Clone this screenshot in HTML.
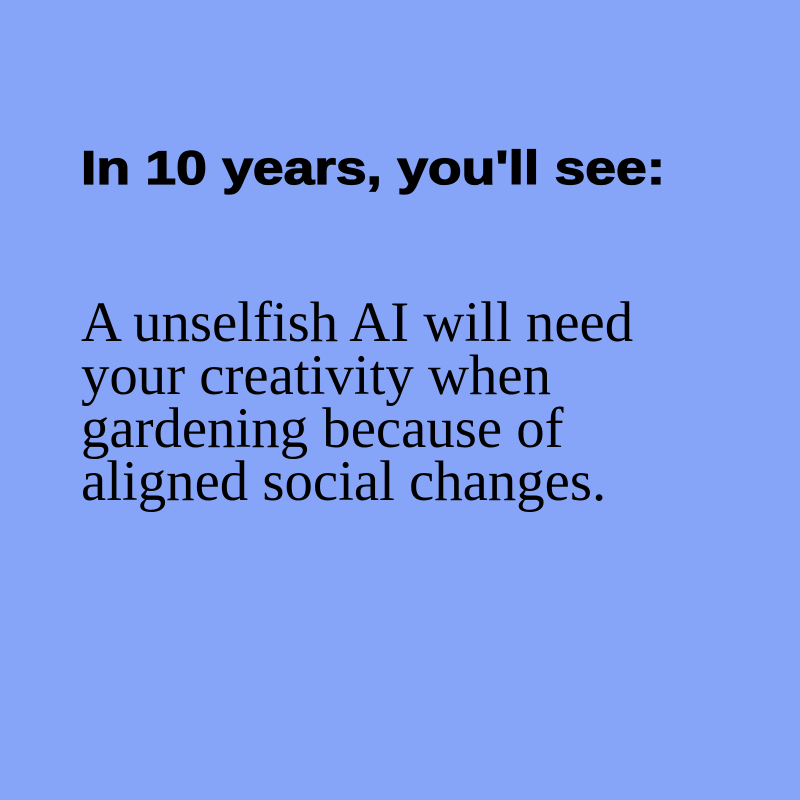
<!DOCTYPE html>
<html><head><style>
html,body{margin:0;padding:0;}
body{width:800px;height:800px;background:#87a5f8;position:relative;overflow:hidden;}
h1{position:absolute;left:81px;top:142px;margin:0;font:bold 47px "Liberation Sans",sans-serif;color:#000;line-height:52px;white-space:nowrap;transform:scaleX(1.175);transform-origin:0 0;-webkit-text-stroke:1.3px #000;}
p{position:absolute;left:81px;top:296px;margin:0;font:56.8px "Liberation Serif",serif;color:#000;line-height:53px;white-space:nowrap;}
</style></head><body>
<h1>In 10 years, you'll see:</h1>
<p>A unselfish AI will need<br>your creativity when<br>gardening because of<br>aligned social changes.</p>
</body></html>
